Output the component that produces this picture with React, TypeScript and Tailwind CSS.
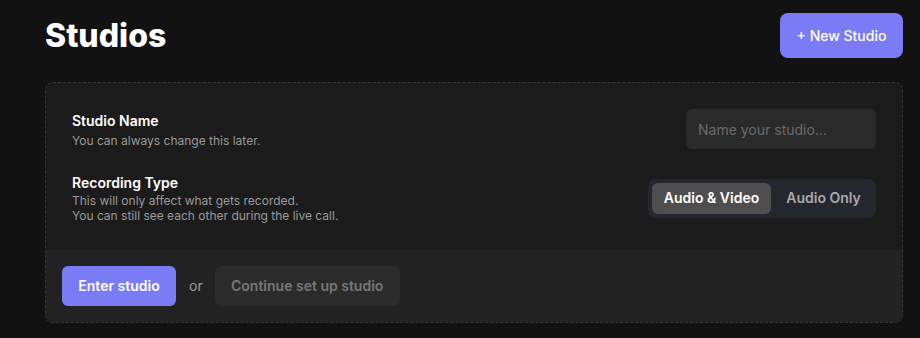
export default function App() {
  return (
    <main className="min-h-[338px] bg-[#121212] pt-[13px] font-['Inter',sans-serif] text-white">
      <div className="ml-[45px] w-[858px]">
        <header className="flex items-center justify-between">
          <h1 className="text-[32px] leading-none font-extrabold">Studios</h1>
          <button className="h-[45px] w-[123px] rounded-lg bg-[#7b7bf6] text-sm font-medium text-white">
            + New Studio
          </button>
        </header>

        <section className="mt-6 overflow-hidden rounded-lg border border-dashed border-[#343434] bg-[#1b1b1b]">
          <div className="flex flex-col gap-6 px-[26px] pt-[26px] pb-[27px]">
            <div className="flex items-center justify-between">
              <div>
                <p className="text-sm font-semibold leading-5">Studio Name</p>
                <p className="mt-[2px] text-xs leading-[15px] text-[#9a9a9a]">
                  You can always change this later.
                </p>
              </div>
              <input
                placeholder="Name your studio..."
                className="h-10 w-[190px] rounded-md bg-[#2a2a2a] px-3 text-sm text-white outline-none placeholder:text-[#6a6a6a]"
              />
            </div>

            <div className="flex items-center justify-between">
              <div>
                <p className="text-sm font-semibold leading-5">Recording Type</p>
                <p className="text-xs leading-[15px] text-[#9a9a9a]">
                  This will only affect what gets recorded.
                  <br />
                  You can still see each other during the live call.
                </p>
              </div>
              <div className="flex h-[39px] w-[228px] items-center gap-1 rounded-lg bg-[#25272e] p-1">
                <button className="h-full w-[119px] rounded-md bg-[#4e4e4e] text-sm font-semibold text-white">
                  Audio &amp; Video
                </button>
                <button className="h-full flex-1 text-sm font-semibold text-[#a9a9a9]">
                  Audio Only
                </button>
              </div>
            </div>
          </div>

          <div className="flex items-center gap-3 bg-[#222222] p-4">
            <button className="h-10 w-[114px] rounded-md bg-[#7b7bf6] text-sm font-semibold text-white">
              Enter studio
            </button>
            <span className="ml-px text-sm text-[#9a9a9a]">or</span>
            <button className="h-10 w-[185px] rounded-md bg-[#2b2b2b] text-sm font-semibold text-[#777777]">
              Continue set up studio
            </button>
          </div>
        </section>
      </div>
    </main>
  );
}
